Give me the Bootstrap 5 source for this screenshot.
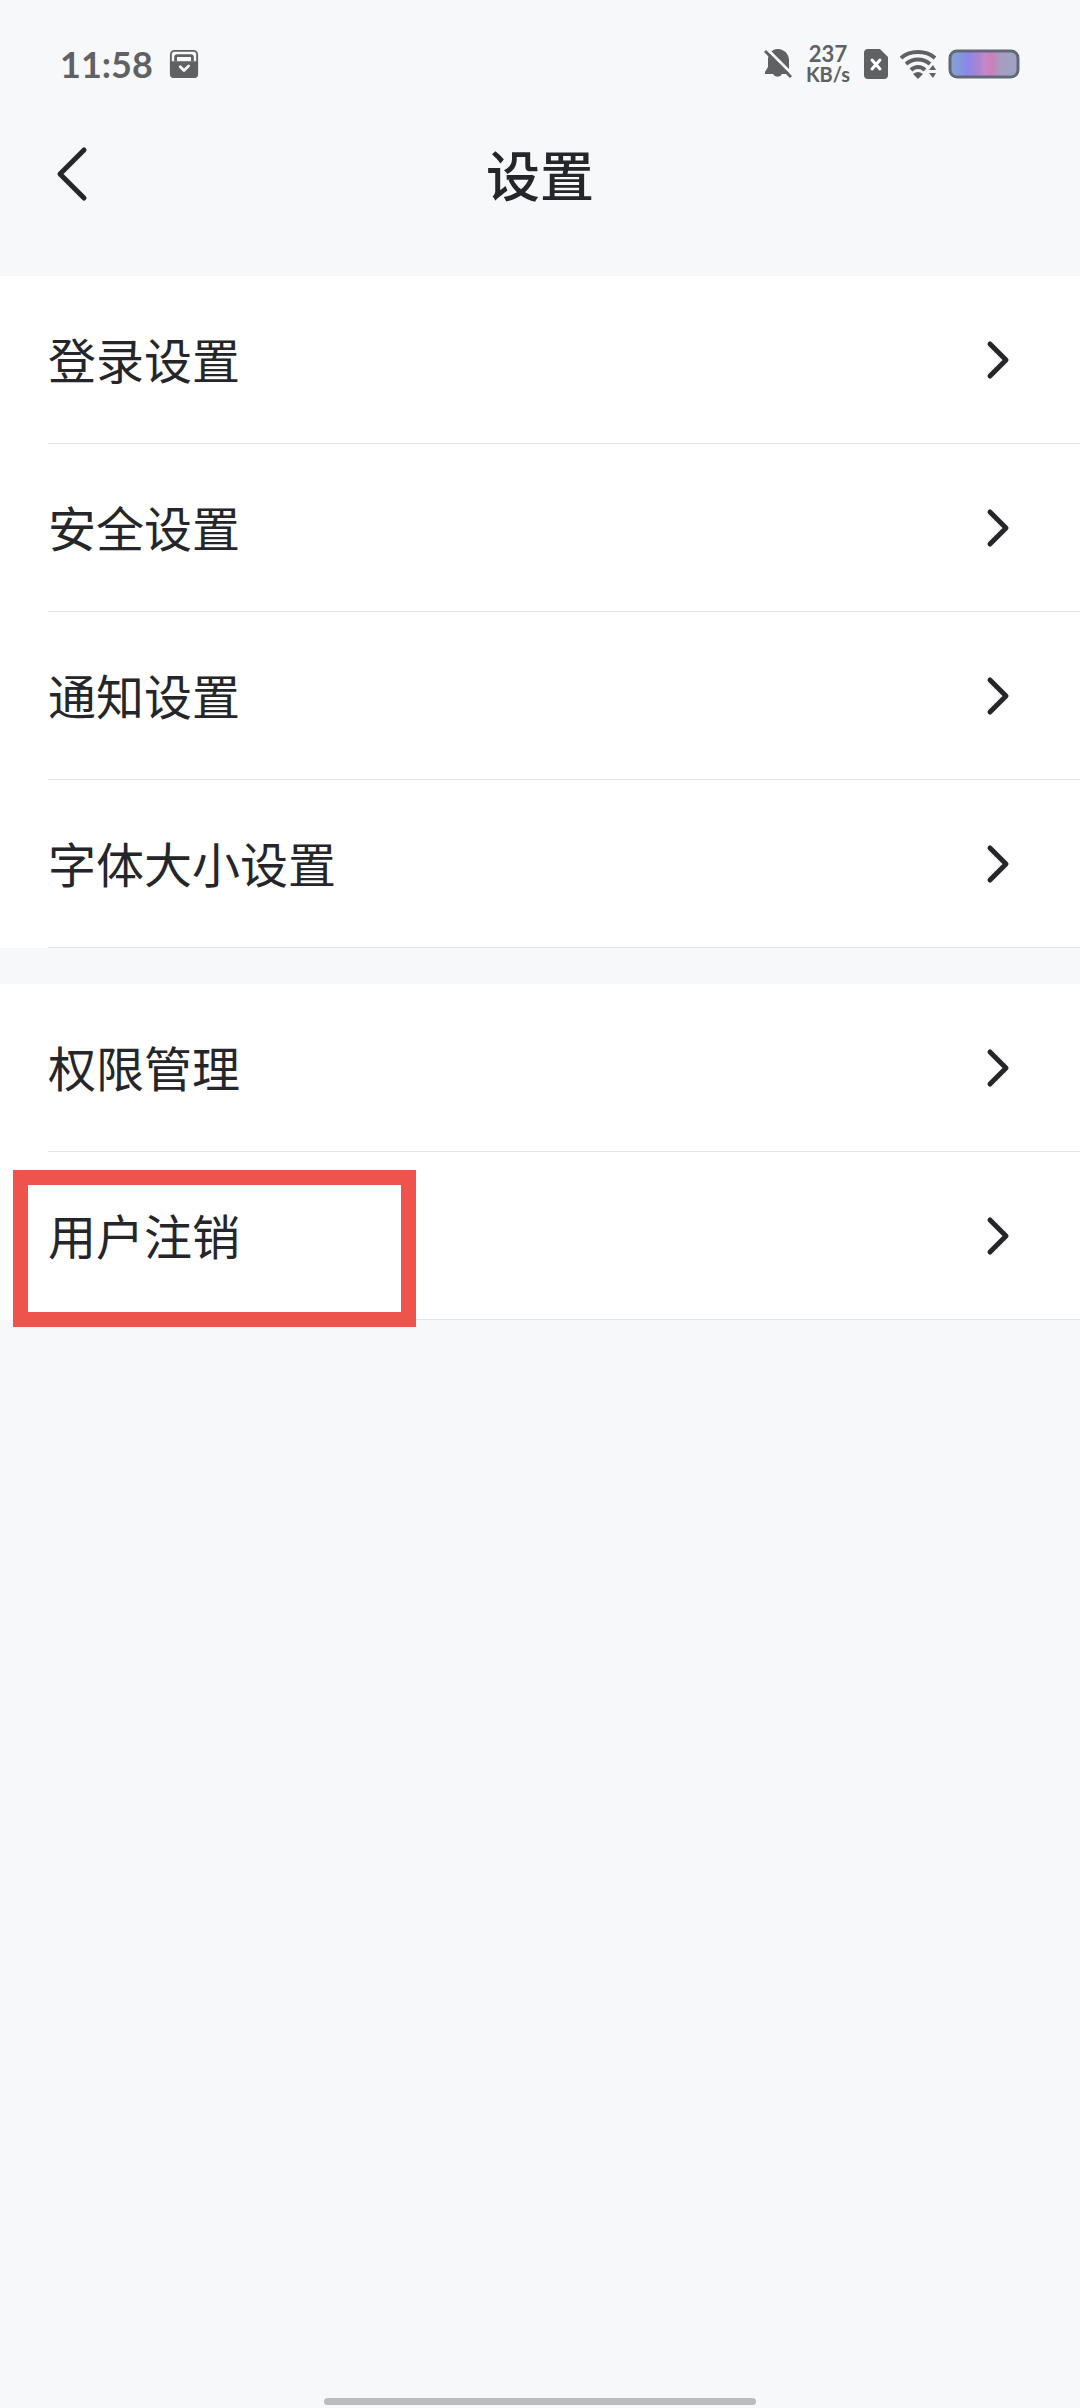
<!DOCTYPE html>
<html lang="zh-CN">
<head>
<meta charset="utf-8">
<meta name="viewport" content="width=device-width, initial-scale=1">
<title>设置</title>
<link href="https://cdn.jsdelivr.net/npm/bootstrap@5.3.0/dist/css/bootstrap.min.css" rel="stylesheet">
<style>
  body { background: #f6f8fa; color: #25262a; font-family: "Noto Sans CJK SC", sans-serif; }
  .status-bar { height: 128px; padding: 0 60px; color: #606163; font-family: Lato, sans-serif; font-weight: 700; }
  .status-icons { gap: 12px; }
  .clock { font-size: 36px; line-height: 48px; }
  .net-speed { width: 48px; font-size: 22px; line-height: 20px; }
  .net-unit { font-size: 20px; }
  .title-bar { height: 148px; padding: 0 48px; }
  .title-bar h1 { font-size: 54px; line-height: 92px; font-weight: 500; }
  .side-slot { width: 48px; height: 92px; }
  .settings-group { background: #fff; padding-left: 48px; }
  .settings-group + .settings-group { margin-top: 36px; }
  .settings-item { height: 168px; padding-right: 66px; border-bottom: 1px solid #e3e4e6; font-size: 48px; line-height: 72px; color: inherit; }
  .item-label { padding-bottom: 4px; }
  .marked { position: relative; }
  .marked::before { content: ""; position: absolute; left: -35px; top: 18px; width: 403px; height: 157px; border: 15px solid #ef544c; pointer-events: none; z-index: 1; }
  .home-bar { width: 40%; height: 7px; background: #bbbcbe; margin-bottom: 3px; }
</style>
<script src="https://cdn.jsdelivr.net/npm/bootstrap@5.3.0/dist/js/bootstrap.bundle.min.js"></script>
</head>
<body class="d-flex flex-column min-vh-100">
<svg class="d-none" aria-hidden="true">
  <symbol id="chevron" viewBox="0 0 30 48"><path d="M6 8l16 16L6 40" fill="none" stroke="currentColor" stroke-width="5" stroke-linecap="round" stroke-linejoin="round"/></symbol>
</svg>
<div class="status-bar d-flex align-items-center justify-content-between">
  <div class="d-flex align-items-center gap-3">
    <span class="clock">11:58</span>
    <svg width="30" height="30" viewBox="0 0 32 32" aria-hidden="true">
      <rect x="2" y="2" width="28" height="28" rx="4" fill="none" stroke="currentColor" stroke-width="2"/>
      <path d="M7 13V9a2 2 0 0 1 2-2h14a2 2 0 0 1 2 2v4" fill="none" stroke="currentColor" stroke-width="3"/>
      <path d="M1 13h30v14a4 4 0 0 1-4 4H5a4 4 0 0 1-4-4z" fill="currentColor"/>
      <path d="M12 19l4 4 5-5" fill="none" stroke="#f6f8fa" stroke-width="3" stroke-linecap="round" stroke-linejoin="round"/>
    </svg>
  </div>
  <div class="status-icons d-flex align-items-center">
    <svg width="28" height="32" viewBox="0 0 28 32" aria-hidden="true">
      <path d="M14 1C7 1 4 7 4 12v7l-3 5v2h8a5 5 0 0 0 9 0h7V12C25 6 20 1 14 1z" fill="currentColor"/>
      <path d="M2 0l28 28" stroke="#f6f8fa" stroke-width="3"/>
      <path d="M1 3l26 26" stroke="currentColor" stroke-width="3"/>
    </svg>
    <div class="net-speed text-center"><div>237</div><div class="net-unit">KB/s</div></div>
    <svg width="24" height="30" viewBox="0 0 24 30" aria-hidden="true">
      <path d="M4 0h12l8 8v18a4 4 0 0 1-4 4H4a4 4 0 0 1-4-4V4a4 4 0 0 1 4-4z" fill="currentColor"/>
      <path d="M8 11l8 9M16 11l-8 9" stroke="#fff" stroke-width="3" stroke-linecap="round"/>
    </svg>
    <svg width="36" height="30" viewBox="0 0 36 30" aria-hidden="true">
      <g fill="none" stroke="currentColor" stroke-width="4">
        <path d="M1 9C10 1 26 1 35 9"/>
        <path d="M6 15c7-6 17-6 24 0"/>
        <path d="M11 21c4-4 10-4 14 0"/>
      </g>
      <path d="M18 30l-5-5q5-4 10 0z" fill="currentColor"/>
      <path d="M33 13l-6 8v9h9V13z" fill="#f6f8fa"/>
      <path d="M33 16l3 5h-7zM33 29l3-5h-7z" fill="currentColor"/>
    </svg>
    <svg width="72" height="30" viewBox="0 0 72 30" aria-hidden="true">
      <defs><linearGradient id="charge">
        <stop offset="0" stop-color="#8b9fd0"/><stop offset=".15" stop-color="#8398dc"/><stop offset=".25" stop-color="#8c86ee"/>
        <stop offset=".42" stop-color="#a984d0"/><stop offset=".5" stop-color="#c188cb"/><stop offset=".62" stop-color="#cd7fb8"/>
        <stop offset=".74" stop-color="#a99cc2"/><stop offset="1" stop-color="#9ba4c0"/>
      </linearGradient></defs>
      <rect x="2" y="2" width="68" height="26" rx="7" fill="url(#charge)" stroke="#636879" stroke-width="3"/>
    </svg>
  </div>
</div>
<header class="title-bar d-flex align-items-start justify-content-between">
  <button type="button" class="side-slot btn p-0 border-0 d-flex align-items-center text-reset" aria-label="返回">
    <svg width="48" height="60" viewBox="0 0 48 60" aria-hidden="true"><path d="M36 6L12 30l24 24" fill="none" stroke="currentColor" stroke-width="5" stroke-linecap="round" stroke-linejoin="round"/></svg>
  </button>
  <h1 class="m-0">设置</h1>
  <span class="side-slot"></span>
</header>
<main class="flex-grow-1">
  <nav class="settings-group" aria-label="设置">
    <a href="#" class="settings-item d-flex align-items-center justify-content-between text-decoration-none"><span class="item-label">登录设置</span><svg width="30" height="48" aria-hidden="true"><use href="#chevron"/></svg></a>
    <a href="#" class="settings-item d-flex align-items-center justify-content-between text-decoration-none"><span class="item-label">安全设置</span><svg width="30" height="48" aria-hidden="true"><use href="#chevron"/></svg></a>
    <a href="#" class="settings-item d-flex align-items-center justify-content-between text-decoration-none"><span class="item-label">通知设置</span><svg width="30" height="48" aria-hidden="true"><use href="#chevron"/></svg></a>
    <a href="#" class="settings-item d-flex align-items-center justify-content-between text-decoration-none"><span class="item-label">字体大小设置</span><svg width="30" height="48" aria-hidden="true"><use href="#chevron"/></svg></a>
  </nav>
  <nav class="settings-group" aria-label="账户">
    <a href="#" class="settings-item d-flex align-items-center justify-content-between text-decoration-none"><span class="item-label">权限管理</span><svg width="30" height="48" aria-hidden="true"><use href="#chevron"/></svg></a>
    <a href="#" class="settings-item marked d-flex align-items-center justify-content-between text-decoration-none"><span class="item-label">用户注销</span><svg width="30" height="48" aria-hidden="true"><use href="#chevron"/></svg></a>
  </nav>
</main>
<div class="home-bar rounded-pill mx-auto"></div>
</body>
</html>
